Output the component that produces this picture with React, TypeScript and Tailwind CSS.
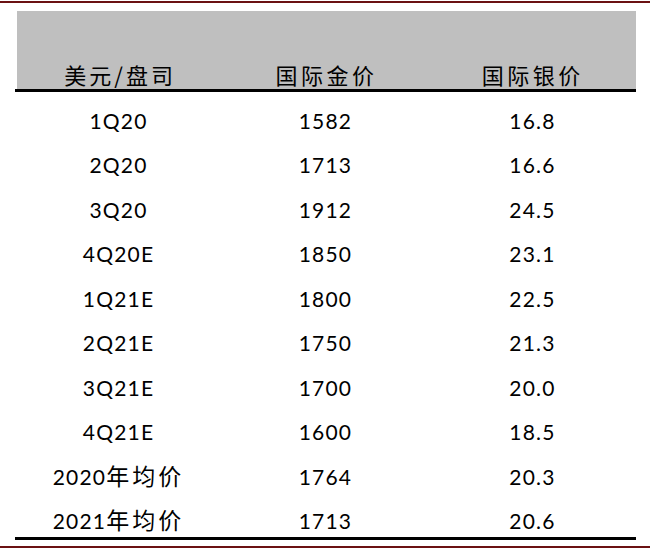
const rows = [
  { period: "1Q20", gold: "1582", silver: "16.8" },
  { period: "2Q20", gold: "1713", silver: "16.6" },
  { period: "3Q20", gold: "1912", silver: "24.5" },
  { period: "4Q20E", gold: "1850", silver: "23.1" },
  { period: "1Q21E", gold: "1800", silver: "22.5" },
  { period: "2Q21E", gold: "1750", silver: "21.3" },
  { period: "3Q21E", gold: "1700", silver: "20.0" },
  { period: "4Q21E", gold: "1600", silver: "18.5" },
  { period: "2020", suffix: "年均价", gold: "1764", silver: "20.3" },
  { period: "2021", suffix: "年均价", gold: "1713", silver: "20.6" },
];

const cjk = "font-['Noto_Sans_CJK_SC',sans-serif]";

export default function App() {
  return (
    <div className="w-[650px] h-[550px] bg-white text-black font-['Lato','Noto_Sans_CJK_SC',sans-serif]">
      <div className="pt-[1px]">
        <div className="h-[2px] bg-[#6b1113]" />
      </div>

      <div className="ml-[15px] mt-[8px] w-[621px]">
        {/* header */}
        <div className="ml-[2px] h-[78px] bg-[#bfbfbf] grid grid-cols-3 items-end pb-[4px]">
          <div className={`text-center text-[22px] leading-[22px] tracking-[3px] ${cjk}`}>美元/盘司</div>
          <div className={`text-center text-[22px] leading-[22px] tracking-[3.5px] ${cjk}`}>国际金价</div>
          <div className={`text-center text-[22px] leading-[22px] tracking-[3.5px] ${cjk}`}>国际银价</div>
        </div>
        <div className="h-[3px] bg-black" />

        {rows.map((r) => (
          <div key={r.period} className="h-[44.5px] grid grid-cols-3 items-end pb-[6px] text-[21px] leading-[20px] tracking-[1.2px]">
            <div className="text-center">
              {r.period}
              {r.suffix && <span className={`text-[23px] tracking-[3px] ${cjk}`}>{r.suffix}</span>}
            </div>
            <div className="text-center">{r.gold}</div>
            <div className="text-center">{r.silver}</div>
          </div>
        ))}

        <div className="h-[3px] bg-black" />
      </div>

      <div className="mt-[6px] h-[2px] bg-[#6b1113]" />
    </div>
  );
}
